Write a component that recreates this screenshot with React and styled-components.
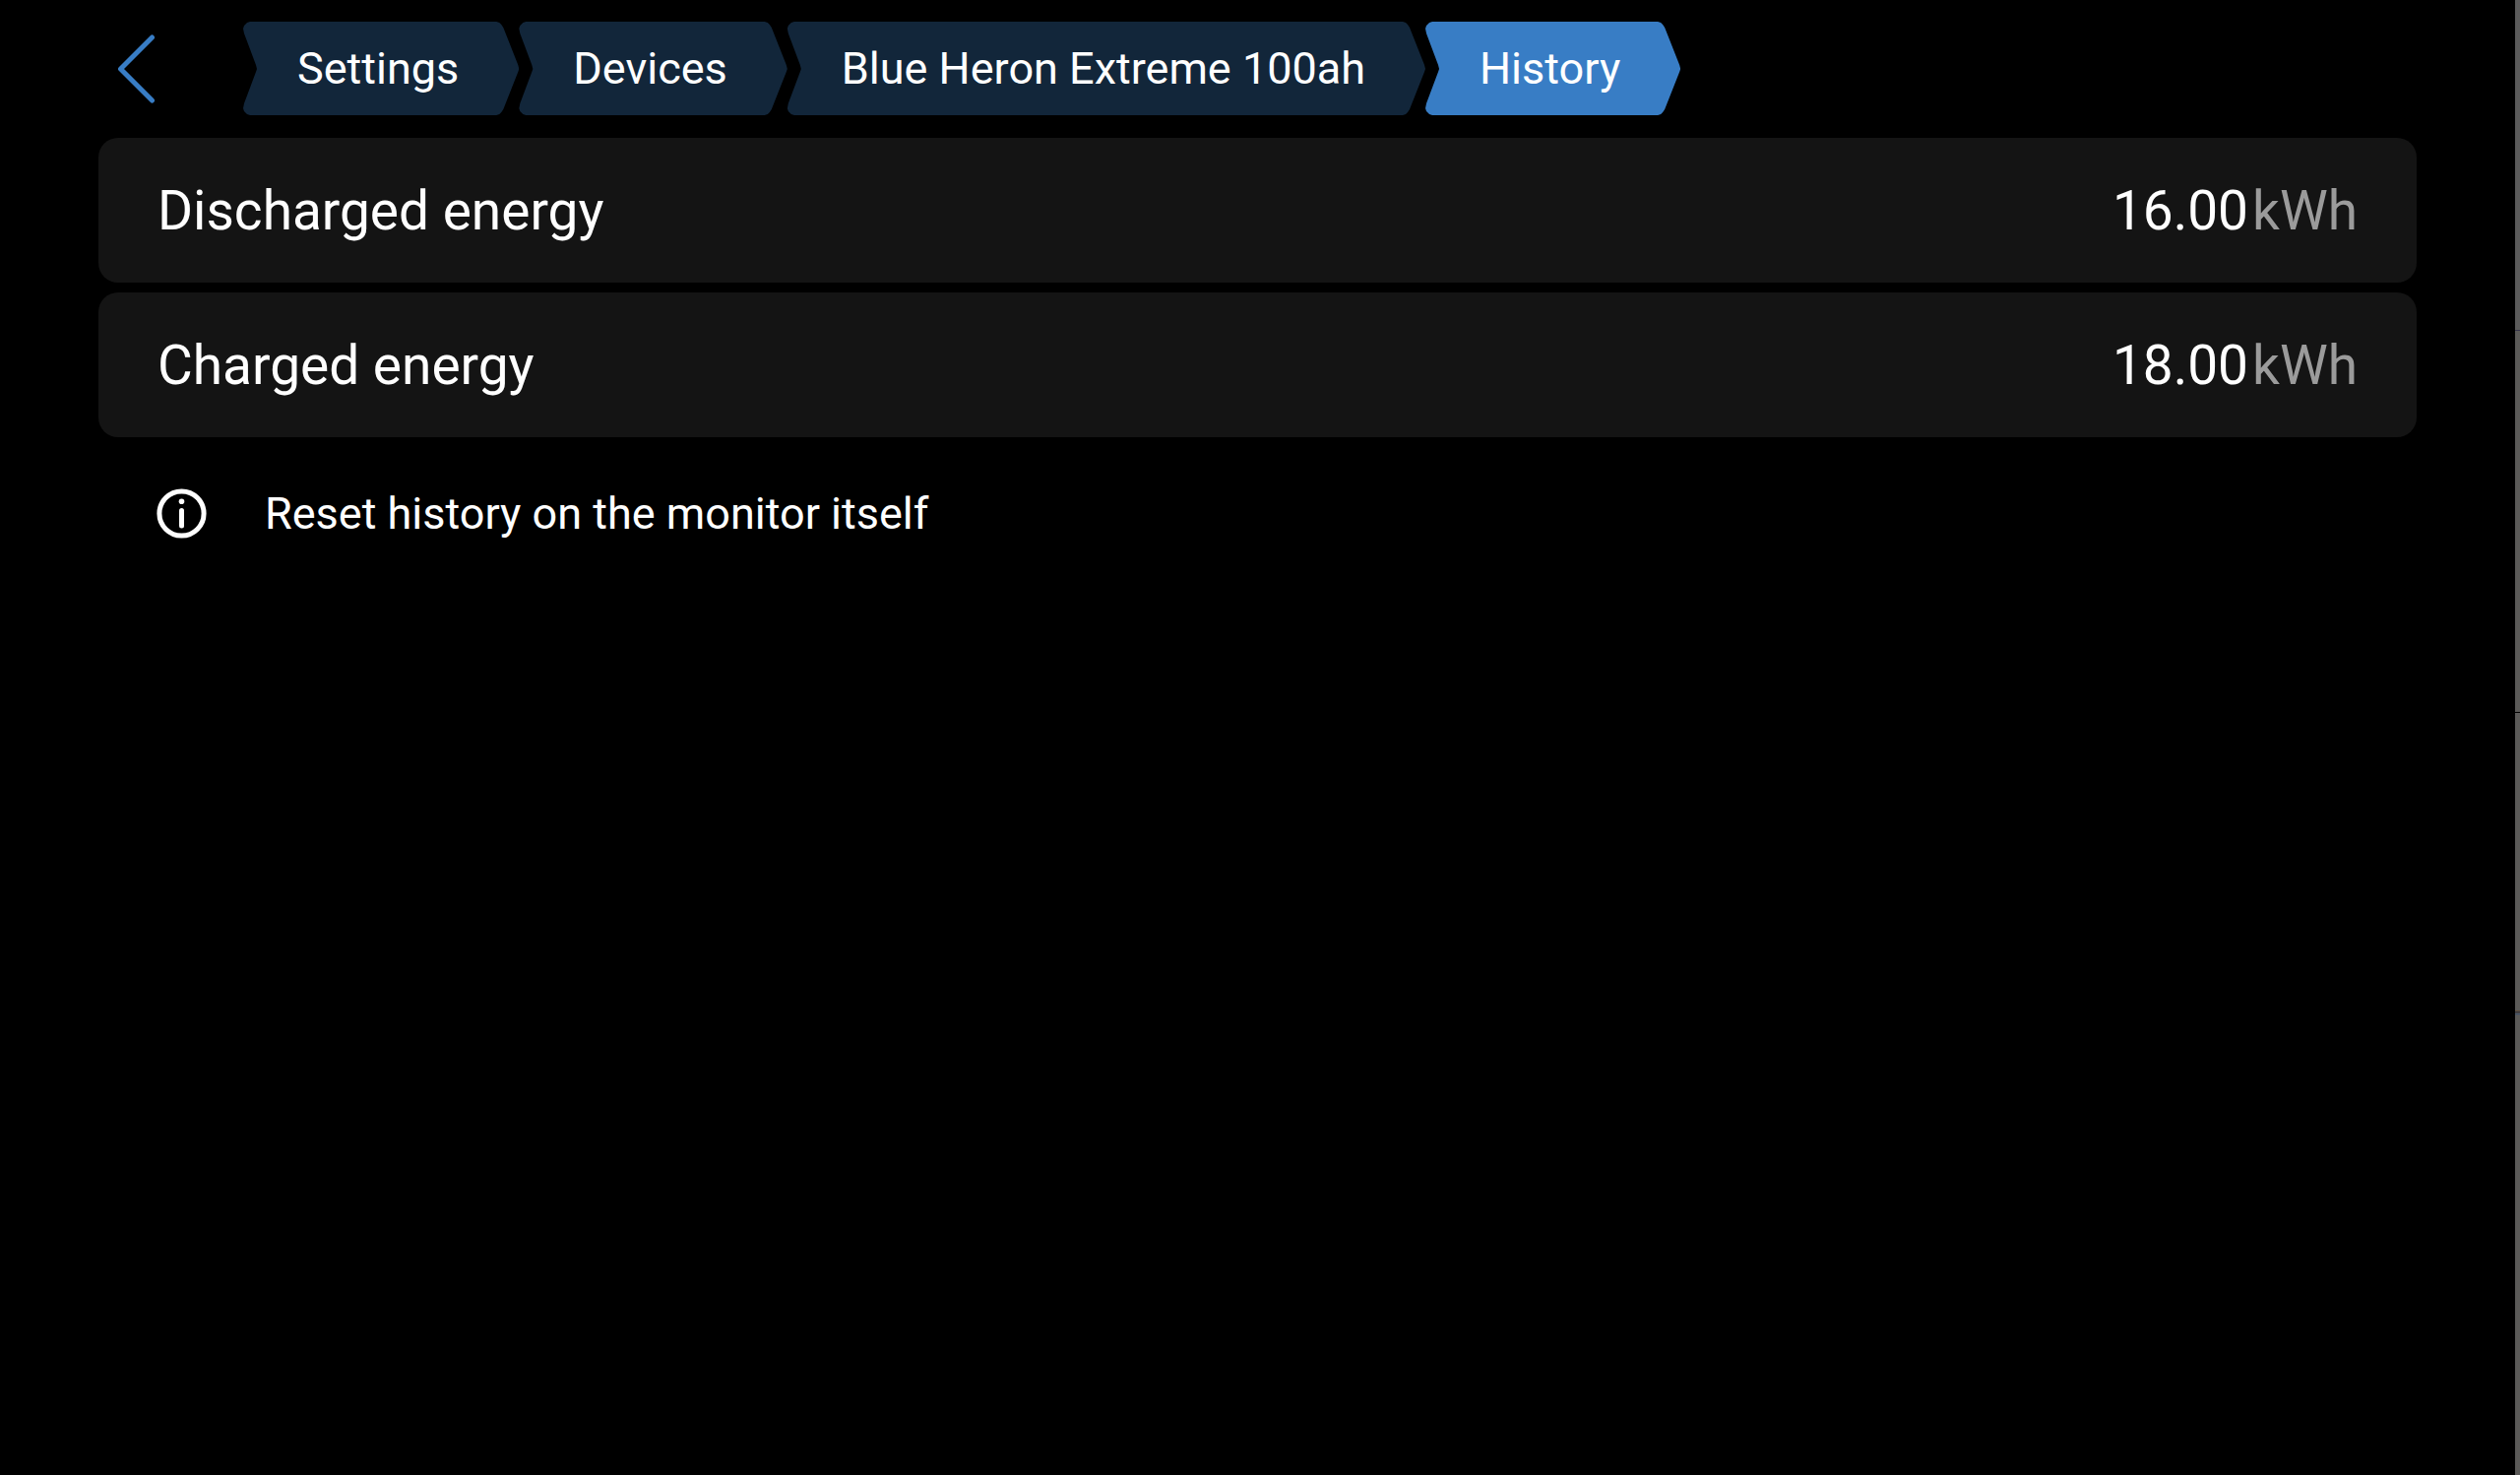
import React from "react";
import styled, { createGlobalStyle } from "styled-components";

const crumbs = [
  { label: "Settings", href: "#settings" },
  { label: "Devices", href: "#devices" },
  { label: "Blue Heron Extreme 100ah", href: "#device" },
  { label: "History", href: "#history" },
];

const readings = [
  { label: "Discharged energy", value: "16.00", unit: "kWh" },
  { label: "Charged energy", value: "18.00", unit: "kWh" },
];

const App = () => {
  return (
    <>
      <GlobalStyle />
      <Screen>
        <Content>
          <Header>
            <BackButton type="button" aria-label="Back">
              <svg width="39" height="70" viewBox="0 0 39 70" aria-hidden="true">
                <path d="M35.5 3 3.5 35l32 32" />
              </svg>
            </BackButton>
            <nav aria-label="Breadcrumb">
              <Breadcrumbs>
                {crumbs.map((crumb, index) => {
                  const active = index === crumbs.length - 1;
                  return (
                    <li key={crumb.label}>
                      <Crumb
                        href={crumb.href}
                        $active={active}
                        aria-current={active ? "page" : undefined}
                      >
                        {crumb.label}
                      </Crumb>
                    </li>
                  );
                })}
              </Breadcrumbs>
            </nav>
          </Header>

          <Readings>
            {readings.map((reading) => (
              <Row key={reading.label}>
                <dt>{reading.label}</dt>
                <Value>
                  {reading.value}
                  <Unit>{reading.unit}</Unit>
                </Value>
              </Row>
            ))}
          </Readings>

          <Note>
            <InfoIcon />
            <p>Reset history on the monitor itself</p>
          </Note>
        </Content>
        <Edge />
      </Screen>
    </>
  );
};

const InfoIcon = () => (
  <svg width="51" height="51" viewBox="0 0 51 51" aria-hidden="true">
    <circle cx="25.5" cy="25.5" r="22.6" fill="none" stroke="#fff" strokeWidth="5" />
    <circle cx="25.5" cy="13.2" r="2.8" fill="#fff" />
    <path d="M25.5 22.5v15.5" stroke="#fff" strokeWidth="5" strokeLinecap="round" />
  </svg>
);

const GlobalStyle = createGlobalStyle`
  * {
    box-sizing: border-box;
  }
  body {
    margin: 0;
    background: #000;
    color: #fff;
    font-family: Roboto, "Liberation Sans", sans-serif;
  }
  p, dl, dd, ol {
    margin: 0;
    padding: 0;
  }
`;

const Screen = styled.div`
  display: flex;
  min-height: 100vh;
`;

const Content = styled.main`
  flex: 1;
  padding: 22px 100px 0;
`;

/* thin strip of the frame on the right */
const Edge = styled.div`
  width: 5px;
  background: linear-gradient(
    #5b5b5b 335px,
    #34344a 335px 336px,
    #5b5a58 336px 723px,
    #000 723px 724px,
    #5b5a58 724px 1026px,
    #5e5040 1026px 1027px,
    #403e40 1027px 1029px,
    #4a5462 1029px 1031px,
    #5b5a58 1031px
  );
`;

const Header = styled.header`
  display: flex;
  align-items: center;
`;

const BackButton = styled.button`
  display: flex;
  align-items: center;
  width: 147px;
  height: 95px;
  padding: 0 0 0 19px;
  border: 0;
  background: none;
  cursor: pointer;

  path {
    fill: none;
    stroke: #387dc5;
    stroke-width: 5;
    stroke-linecap: round;
    stroke-linejoin: round;
  }
`;

const Breadcrumbs = styled.ol`
  display: flex;
  list-style: none;
`;

/* arrow shape with softened corners, notch on the left and tip on the right */
const Crumb = styled.a`
  display: flex;
  align-items: center;
  height: 95px;
  padding: 0 61px 0 55px;
  background: ${({ $active }) => ($active ? "#387dc5" : "#12263a")};
  color: #fff;
  font-size: 45px;
  line-height: 53px;
  text-decoration: none;
  white-space: nowrap;
  clip-path: polygon(
    7px 0,
    calc(100% - 23px) 0,
    calc(100% - 20px) 1px,
    calc(100% - 18px) 3px,
    calc(100% - 16px) 6px,
    calc(100% - 1px) 44px,
    100% 48px,
    calc(100% - 1px) 51px,
    calc(100% - 16px) 89px,
    calc(100% - 18px) 92px,
    calc(100% - 20px) 94px,
    calc(100% - 23px) 100%,
    7px 100%,
    4px 94px,
    1px 91px,
    0 88px,
    1px 83px,
    13px 51px,
    14px 48px,
    13px 44px,
    1px 12px,
    0 7px,
    1px 4px,
    4px 1px
  );
`;

const Readings = styled.dl`
  display: flex;
  flex-direction: column;
  gap: 10px;
  margin-top: 23px;
`;

const Row = styled.div`
  display: flex;
  justify-content: space-between;
  align-items: center;
  height: 147px;
  padding: 0 60px;
  border-radius: 20px;
  background: #141414;
  font-size: 55px;
  line-height: 64px;
`;

const Value = styled.dd`
  display: flex;
  gap: 4px;
`;

const Unit = styled.span`
  color: #9b9b9b;
`;

const Note = styled.div`
  display: flex;
  align-items: center;
  gap: 59px;
  margin-top: 51px;
  padding-left: 59px;
  font-size: 45px;
  line-height: 53px;
`;

export default App;
